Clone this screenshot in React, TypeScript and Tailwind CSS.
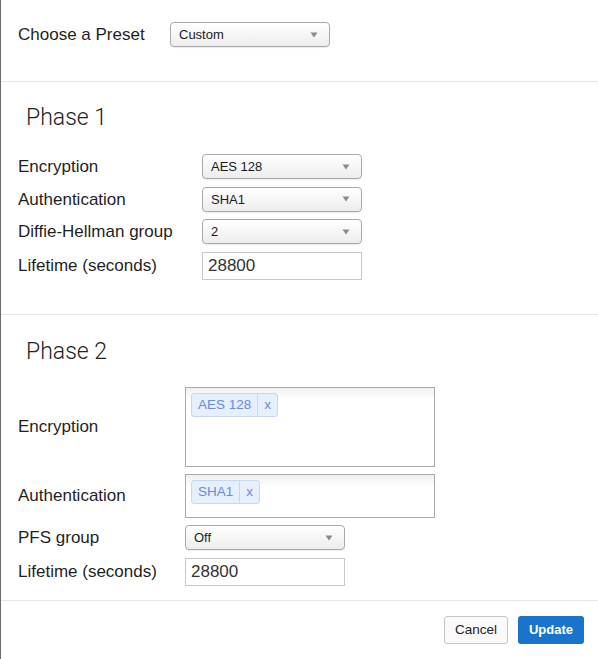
import React from "react";

const font = { fontFamily: '"Liberation Sans", Arial, sans-serif' };

function Caret() {
  return (
    <svg width="8" height="6" viewBox="0 0 8 6" className="shrink-0">
      <path d="M0.5 0.5 L7.5 0.5 L4 5.5 Z" fill="#8a8a8a" />
    </svg>
  );
}

function Select({ value, w }: { value: string; w: string }) {
  return (
    <div
      className={`${w} h-[25px] flex items-center justify-between pl-[8px] pr-[11px] rounded-[4px] border border-[#a9a9a9] bg-gradient-to-b from-white to-[#ededed] shadow-[0_1px_1px_rgba(0,0,0,0.08)] text-[13px] text-[#1a1a1a]`}
    >
      <span>{value}</span>
      <Caret />
    </div>
  );
}

function TextInput({ value, w }: { value: string; w: string }) {
  return (
    <div
      className={`${w} h-[28px] flex items-center pl-[5px] border border-[#c8c8c8] bg-white text-[17px] text-[#333]`}
    >
      {value}
    </div>
  );
}

function Tag({ label }: { label: string }) {
  return (
    <div className="inline-flex h-[24px] items-stretch rounded-[3px] border border-[#c5d7f5] bg-[#e6effc] text-[13.5px] text-[#6a8ae0]">
      <span className="flex items-center px-[6px]">{label}</span>
      <span className="flex items-center border-l border-[#c5d7f5] px-[6px] pb-[1px]">x</span>
    </div>
  );
}

function MultiBox({ label, h }: { label: string; h: string }) {
  return (
    <div
      className={`w-[250px] ${h} border border-[#a9a9a9] bg-gradient-to-b from-[#f0f0f0] via-white via-[12px] to-white pl-[5px] pt-[4px]`}
    >
      <Tag label={label} />
    </div>
  );
}

function Row({
  label,
  labelW,
  children,
}: {
  label: string;
  labelW: string;
  children: React.ReactNode;
}) {
  return (
    <div className="flex items-center">
      <div className={`${labelW} shrink-0 text-[17px] text-[#1f1f1f]`}>{label}</div>
      {children}
    </div>
  );
}

function Heading({ children }: { children: React.ReactNode }) {
  return (
    <div
      className="pl-[25px] h-[26px] leading-[26px] text-[23px] font-light text-[#222]"
      style={{ fontFamily: 'Roboto, "Open Sans", sans-serif' }}
    >
      {children}
    </div>
  );
}

export default function App() {
  return (
    <div
      className="w-[598px] h-[659px] bg-white border-l border-[#6b6b6b] overflow-hidden flex flex-col"
      style={font}
    >
      {/* Preset */}
      <div className="h-[82px] pt-[22px] pl-[17px] border-b border-[#e6e6e6] shrink-0">
        <Row label="Choose a Preset" labelW="w-[152px]">
          <Select value="Custom" w="w-[160px]" />
        </Row>
      </div>

      {/* Phase 1 */}
      <div className="h-[233px] pt-[23px] border-b border-[#e6e6e6] shrink-0">
        <Heading>Phase 1</Heading>
        <div className="pl-[17px] pt-[23px] flex flex-col gap-[7px]">
          <Row label="Encryption" labelW="w-[184px]">
            <Select value="AES 128" w="w-[160px]" />
          </Row>
          <Row label="Authentication" labelW="w-[184px]">
            <Select value="SHA1" w="w-[160px]" />
          </Row>
          <Row label="Diffie-Hellman group" labelW="w-[184px]">
            <Select value="2" w="w-[160px]" />
          </Row>
          <Row label="Lifetime (seconds)" labelW="w-[184px]">
            <TextInput value="28800" w="w-[160px]" />
          </Row>
        </div>
      </div>

      {/* Phase 2 */}
      <div className="h-[286px] pt-[24px] border-b border-[#e6e6e6] shrink-0">
        <Heading>Phase 2</Heading>
        <div className="pl-[17px] pt-[22px] flex flex-col">
          <Row label="Encryption" labelW="w-[167px]">
            <MultiBox label="AES 128" h="h-[80px]" />
          </Row>
          <div className="h-[7px]" />
          <Row label="Authentication" labelW="w-[167px]">
            <MultiBox label="SHA1" h="h-[44px]" />
          </Row>
          <div className="h-[7px]" />
          <Row label="PFS group" labelW="w-[167px]">
            <Select value="Off" w="w-[160px]" />
          </Row>
          <div className="h-[7px]" />
          <Row label="Lifetime (seconds)" labelW="w-[167px]">
            <TextInput value="28800" w="w-[160px]" />
          </Row>
        </div>
      </div>

      {/* Footer */}
      <div className="flex justify-end gap-[10px] pt-[15px] pr-[14px]">
        <button className="w-[64px] h-[28px] rounded-[3px] border border-[#c6c6c6] bg-[#fafafa] text-[13.5px] text-[#222]">
          Cancel
        </button>
        <button className="w-[66px] h-[28px] rounded-[3px] bg-[#1b74cc] text-[13px] font-bold text-white">
          Update
        </button>
      </div>
    </div>
  );
}
